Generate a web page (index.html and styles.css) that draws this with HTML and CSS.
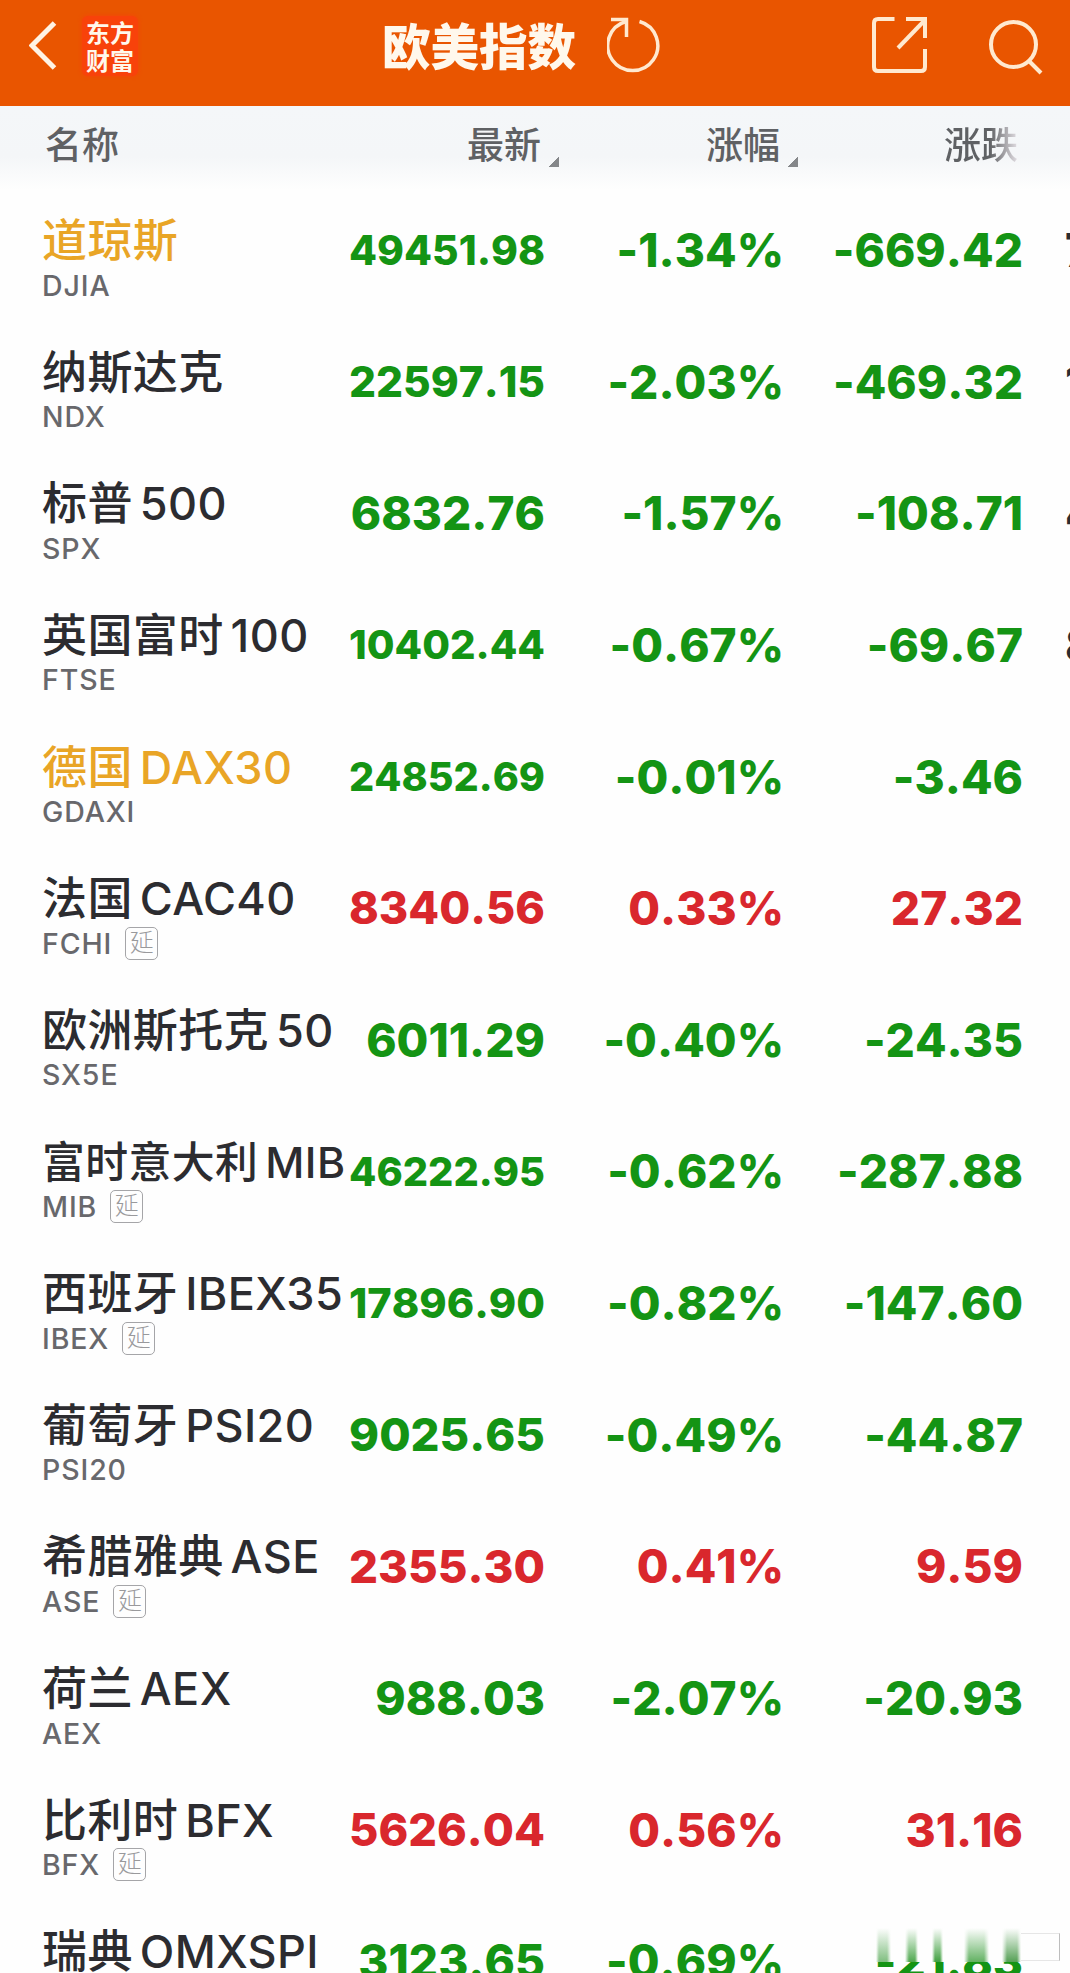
FILE: index.html
```html
<!DOCTYPE html>
<html lang="zh-CN">
<head>
    <meta charset="UTF-8">
    <meta name="viewport" content="width=device-width, initial-scale=1.0">
    <title>欧美指数</title>
    <link rel="stylesheet" href="styles.css">
</head>
<body>
    <header class="topbar">
        <svg class="back" width="28" height="50" viewBox="0 0 28 50"><path d="M25.5 2 L3 24.5 L25.5 47"/></svg>
        <div class="logo"><span>东方</span><span>财富</span></div>
        <h1>欧美指数</h1>
        <svg class="refresh" width="54" height="56" viewBox="0 0 54 56">
            <path d="M32.5 4.5 A25 25 0 1 1 19 4.5"/>
            <path d="M4 2.5 H19.5 V20"/>
        </svg>
        <svg class="share" width="56" height="58" viewBox="0 0 56 58">
            <path d="M22.5 3 H6 Q2 3 2 7 V51 Q2 55 6 55 H49 Q53 55 53 51 V33"/>
            <path d="M34 3 H53 V22"/>
            <path d="M26 32 L53 4"/>
        </svg>
        <svg class="search" width="54" height="56" viewBox="0 0 54 56">
            <circle cx="24.5" cy="25.5" r="22.5"/>
            <path d="M40 42 L52 54"/>
        </svg>
    </header>

    <div class="row columns">
        <span class="name">名称</span>
        <span class="sort">最新</span>
        <span class="sort">涨幅</span>
        <span class="faded">涨跌</span>
    </div>

    <main id="list"></main>
    <div class="smear"></div>

    <script>
        // name, latin part, code, delayed, last, percent, change, next column
        const indices = [
            ['道琼斯', '', 'DJIA', 0, '49451.98', '-1.34%', '-669.42', '7'],
            ['纳斯达克', '', 'NDX', 0, '22597.15', '-2.03%', '-469.32', '1'],
            ['标普', '500', 'SPX', 0, '6832.76', '-1.57%', '-108.71', '4'],
            ['英国富时', '100', 'FTSE', 0, '10402.44', '-0.67%', '-69.67', '8'],
            ['德国', 'DAX30', 'GDAXI', 0, '24852.69', '-0.01%', '-3.46', ''],
            ['法国', 'CAC40', 'FCHI', 1, '8340.56', '0.33%', '27.32', ''],
            ['欧洲斯托克', '50', 'SX5E', 0, '6011.29', '-0.40%', '-24.35', ''],
            ['富时意大利', 'MIB', 'MIB', 1, '46222.95', '-0.62%', '-287.88', ''],
            ['西班牙', 'IBEX35', 'IBEX', 1, '17896.90', '-0.82%', '-147.60', ''],
            ['葡萄牙', 'PSI20', 'PSI20', 0, '9025.65', '-0.49%', '-44.87', ''],
            ['希腊雅典', 'ASE', 'ASE', 1, '2355.30', '0.41%', '9.59', ''],
            ['荷兰', 'AEX', 'AEX', 0, '988.03', '-2.07%', '-20.93', ''],
            ['比利时', 'BFX', 'BFX', 1, '5626.04', '0.56%', '31.16', ''],
            ['瑞典', 'OMXSPI', '', 0, '3123.65', '-0.69%', '-21.83', '']
        ];
        const favorites = ['DJIA', 'GDAXI'];

        let html = '';
        indices.forEach(([name, latin, code, delayed, last, percent, change, next]) => {
            const trend = percent.startsWith('-') ? 'down' : 'up';
            html += `
                <div class="row ${trend}">
                    <div class="name">
                        <div class="title ${favorites.includes(code) ? 'favorite' : ''}"><span class="fit" data-max="303">${name}<span class="latin">${latin}</span></span></div>
                        <div class="code">${code}${delayed ? '<span class="delay">延</span>' : ''}</div>
                    </div>
                    <div class="value"><span class="fit" data-max="196">${last}</span></div>
                    <div class="value">${percent}</div>
                    <div class="value">${change}</div>
                    <div class="next">${next}</div>
                </div>`;
        });
        document.getElementById('list').innerHTML = html;

        // Shrink long texts to the width of their column
        document.querySelectorAll('.fit').forEach(el => {
            const max = Number(el.dataset.max);
            const width = el.getBoundingClientRect().width;
            if (width > max) {
                const size = parseFloat(getComputedStyle(el).fontSize);
                el.style.fontSize = (size * max / width) + 'px';
            }
        });
    </script>
</body>
</html>
```
FILE: styles.css
```css
* {
    box-sizing: border-box;
}

body {
    position: relative;
    margin: 0;
    height: 1973px;
    overflow: hidden;
    background-color: #fefefe;
    color: #2c2c30;
    font-family: Inter, "Noto Sans CJK SC", sans-serif;
}

.topbar {
    display: flex;
    align-items: flex-start;
    height: 106px;
    background-color: #e95500;
    color: #fff8ec;
}

.topbar svg {
    flex: none;
    fill: none;
    stroke: #ffe9cf;
    stroke-width: 4;
}

.topbar .back {
    margin: 21px 0 0 29px;
    stroke: #fff3e4;
    stroke-width: 5;
}

.logo {
    display: flex;
    flex-direction: column;
    align-items: center;
    justify-content: center;
    width: 56px;
    height: 60px;
    margin: 16px 0 0 25px;
    border-radius: 6px;
    background-color: #f8420a;
    box-shadow: 0 0 4px #f8420a;
    font-family: "Noto Sans CJK SC", sans-serif;
    font-size: 24px;
    font-weight: 700;
    line-height: 28px;
}

h1 {
    margin: 8px 0 0 244px;
    font-family: "Noto Sans CJK SC", sans-serif;
    font-size: 48.5px;
    font-weight: 900;
    line-height: 72px;
}

.topbar .refresh {
    margin: 17px 0 0 31px;
    stroke-width: 3.5;
}

.topbar .share {
    margin: 16px 0 0 211px;
}

.topbar .search {
    margin: 19px 0 0 61px;
}

.row {
    display: grid;
    grid-template-columns: 302px 201px 239px 239px 47px;
    height: 131.65px;
    padding-left: 42px;
}

.columns {
    height: 84px;
    padding-top: 12px;
    background: linear-gradient(#f4f7f9 0, #f4f6f8 60%, #fefefe 100%);
    color: #5f6164;
    font-size: 37px;
    font-weight: 500;
    line-height: 56px;
    text-align: right;
}

.columns .name {
    padding-left: 3px;
    text-align: left;
}

.sort::after {
    content: "";
    float: right;
    width: 10px;
    height: 10px;
    margin: 39px -15px 0 8px;
    background: linear-gradient(135deg, transparent 50%, #85878a 50%);
}

.sort {
    padding-right: 1px;
}

.faded {
    padding-right: 5px;
    background: linear-gradient(90deg, #5f6164 86%, #e4e0e5 98%);
    background-clip: text;
    color: transparent;
}

.title {
    height: 56px;
    margin-top: 23px;
    font-size: 45px;
    font-weight: 500;
    line-height: 56px;
    letter-spacing: 0.4px;
    white-space: nowrap;
}

.latin {
    margin-left: 7px;
}

.favorite {
    color: #e9a526;
}

.code {
    display: flex;
    align-items: center;
    height: 32px;
    color: #68686c;
    font-size: 28.5px;
    font-weight: 500;
    letter-spacing: 0.9px;
}

.delay {
    width: 33px;
    height: 33px;
    margin-left: 13px;
    border: 1.5px solid #a5a5a8;
    border-radius: 5px;
    color: #99999c;
    font-size: 24px;
    font-weight: 300;
    line-height: 29px;
    letter-spacing: 0;
    text-align: center;
}

.value,
.next {
    display: flex;
    align-items: center;
    justify-content: flex-end;
    height: 56px;
    margin-top: 32px;
    font-size: 46px;
    font-weight: 800;
    font-kerning: none;
    font-feature-settings: "calt" 0;
    white-space: nowrap;
}

.up .value {
    color: #d9272d;
}

.down .value {
    color: #149414;
}

.next {
    justify-content: flex-start;
    padding-left: 42px;
}

/* streaks over the last change value */
.smear {
    position: absolute;
    left: 874px;
    top: 1928px;
    width: 186px;
    height: 34px;
    background:
        linear-gradient(#fefefe, transparent),
        linear-gradient(90deg,
            transparent 2px, #7fbe7f 5px 13px, transparent 17px 31px,
            #4fa84f 35px 41px, transparent 44px 58px,
            #3fa03f 61px 66px, transparent 69px 90px,
            #62b162 95px 110px, transparent 115px 128px,
            #55a055 133px 143px, transparent 147px),
        #fefefe;
}

.smear::after {
    content: "";
    position: absolute;
    right: 0;
    bottom: 1px;
    width: 38px;
    height: 26px;
    border: 1px solid #e6e6e6;
    border-left: none;
    border-right-color: #bdbdbd;
}
```
